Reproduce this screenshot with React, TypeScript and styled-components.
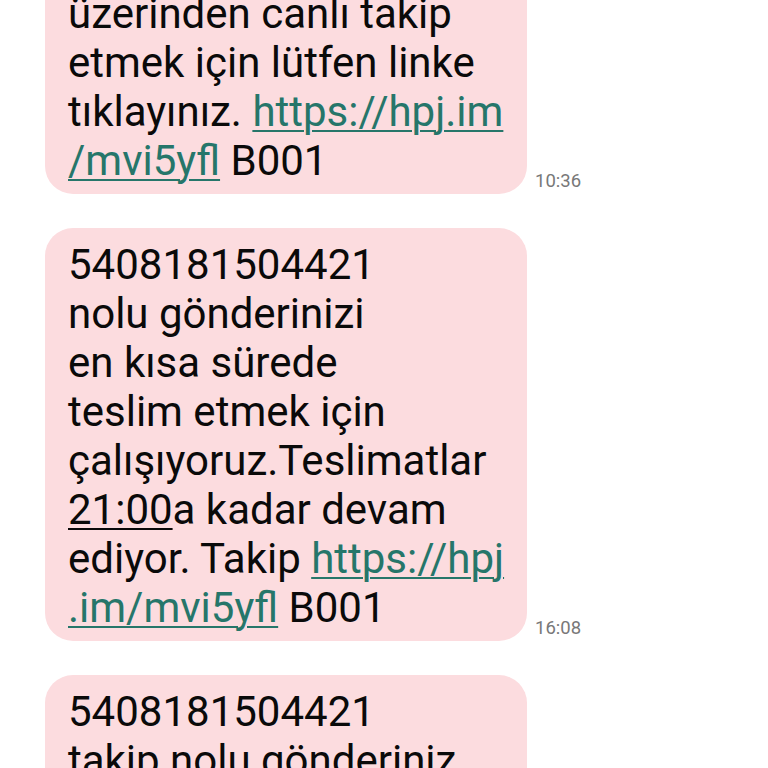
import React from "react";
import styled, { createGlobalStyle } from "styled-components";

const Global = createGlobalStyle`
  html, body { margin: 0; padding: 0; background: #ffffff; }
  body { font-family: Roboto, "Noto Sans", "Liberation Sans", sans-serif; overflow: hidden; }
`;

const Screen = styled.div`
  width: 768px;
  height: 768px;
  overflow: hidden;
  background: #ffffff;
`;

const Thread = styled.div`
  display: flex;
  flex-direction: column;
  gap: 34px;
  padding-left: 45px;
  margin-top: -72.5px;
`;

const Row = styled.div`
  display: flex;
  align-items: flex-end;
  gap: 8px;
`;

const Bubble = styled.div`
  width: 482px;
  box-sizing: border-box;
  background: #fcdcdf;
  border-radius: 28px;
  padding: 12px 18px 9px 23px;
  color: #0a0a0a;
  font-size: 42px;
  line-height: 49px;
`;

const Line = styled.span`
  display: block;
  white-space: nowrap;
`;

const Link = styled.span`
  color: #26766a;
  text-decoration: underline;
  text-decoration-thickness: 2px;
  text-underline-offset: 4px;
`;

const Detected = styled.span`
  text-decoration: underline;
  text-decoration-thickness: 2px;
  text-underline-offset: 4px;
`;

const Time = styled.span`
  font-size: 18.5px;
  line-height: 22px;
  color: #787878;
  margin-bottom: 2px;
`;

export default function App() {
  return (
    <Screen>
      <Global />
      <Thread>
        <Row>
          <Bubble>
            <Line>HepsiJET mobil uygulaması</Line>
            <Line>üzerinden canlı takip</Line>
            <Line>etmek için lütfen linke</Line>
            <Line>
              tıklayınız. <Link>https://hpj.im</Link>
            </Line>
            <Line>
              <Link>/mvi5yfl</Link> B001
            </Line>
          </Bubble>
          <Time>10:36</Time>
        </Row>
        <Row>
          <Bubble>
            <Line>5408181504421</Line>
            <Line>nolu gönderinizi</Line>
            <Line>en kısa sürede</Line>
            <Line>teslim etmek için</Line>
            <Line>çalışıyoruz.Teslimatlar</Line>
            <Line>
              <Detected>21:00</Detected>a kadar devam
            </Line>
            <Line>
              ediyor. Takip <Link>https://hpj</Link>
            </Line>
            <Line>
              <Link>.im/mvi5yfl</Link> B001
            </Line>
          </Bubble>
          <Time>16:08</Time>
        </Row>
        <Row>
          <Bubble>
            <Line>5408181504421</Line>
            <Line>takip nolu gönderiniz</Line>
            <Line>teslim edilmiştir.</Line>
          </Bubble>
        </Row>
      </Thread>
    </Screen>
  );
}
